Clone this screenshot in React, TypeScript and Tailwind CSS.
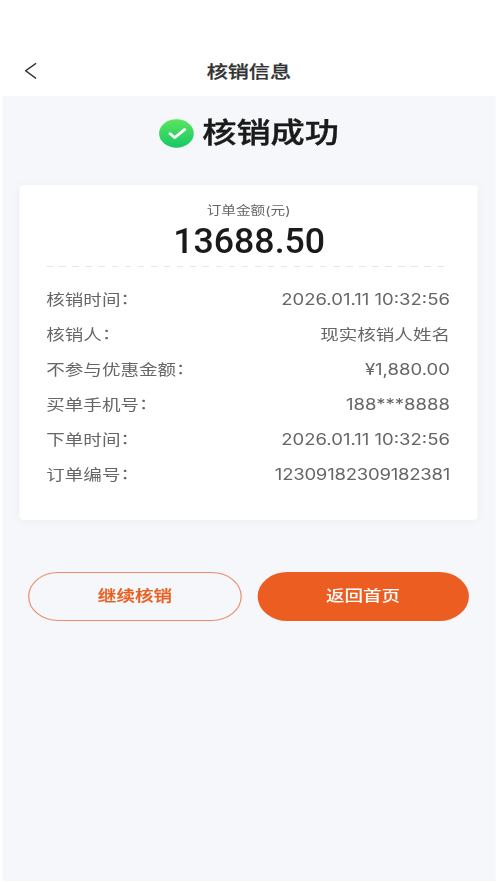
type Row = {
  label: string;
  value: string;
};

const rows: Row[] = [
  { label: '核销时间', value: '2026.01.11 10:32:56' },
  { label: '核销人', value: '现实核销人姓名' },
  { label: '不参与优惠金额', value: '¥1,880.00' },
  { label: '买单手机号', value: '188***8888' },
  { label: '下单时间', value: '2026.01.11 10:32:56' },
  { label: '订单编号', value: '12309182309182381' },
];

function BackIcon() {
  return (
    <svg width="10" height="18" viewBox="0 0 10 18" fill="none">
      <path d="M9.6 1.2L1 8.8L9.6 16.4" stroke="#333333" strokeWidth="1.3" />
    </svg>
  );
}

function SuccessIcon() {
  return (
    <svg width="29" height="29" viewBox="0 0 29 29" fill="none">
      <defs>
        <linearGradient id="success" x1="0" y1="0" x2="0" y2="1">
          <stop offset="0" stopColor="#5be55c" />
          <stop offset="1" stopColor="#16c867" />
        </linearGradient>
      </defs>
      <circle cx="14.5" cy="14.5" r="14.2" fill="url(#success)" />
      <path
        d="M9.2 14.6L13.1 18.6L21.2 10.5"
        stroke="#ffffff"
        strokeWidth="2.5"
        strokeLinecap="round"
        strokeLinejoin="round"
      />
    </svg>
  );
}

export default function App() {
  return (
    <div className="h-[883px] w-[497px] overflow-hidden bg-white">
      {/* 407px layout stretched to the full viewport width */}
      <div className="flex h-full w-[407px] origin-left scale-x-[1.2211] flex-col pr-px pb-[2px] pl-[1.6px] font-['Inter','Noto_Sans_CJK_SC',sans-serif] whitespace-nowrap">
        <header className="grid h-24 shrink-0 grid-cols-[1fr_auto_1fr] items-end bg-white pb-3">
          <button className="mb-[4px] ml-[18.5px] w-fit" aria-label="返回">
            <BackIcon />
          </button>
          <h1 className="text-[17.3px] leading-6 font-medium text-[#333333] [-webkit-text-stroke:0.25px_#333333]">
            核销信息
          </h1>
        </header>

        <main className="flex flex-1 flex-col bg-[#f5f7fb] pr-[15.2px] pl-[14.8px]">
          <div className="mt-[15px] flex h-11 items-center justify-center gap-[7px]">
            <SuccessIcon />
            <span className="text-[28px] leading-10 font-medium text-[#1a1a1a] [-webkit-text-stroke:0.4px_#1a1a1a]">
              核销成功
            </span>
          </div>

          <section className="mt-[30px] flex h-[335px] flex-col rounded bg-white px-[21.5px] pt-[17px] shadow-[0_1px_10px_rgba(0,0,0,0.04)]">
            <p className="text-center text-[12px] leading-[18px] text-[#666666]">订单金额(元)</p>
            <div className="flex h-[42px] items-center justify-center">
              <span className="scale-x-[0.84] font-['Roboto',sans-serif] text-[34.8px] font-medium text-[#1a1a1a]">
                13688.50
              </span>
            </div>
            <div className="mt-1 h-px bg-[repeating-linear-gradient(90deg,#e6e6e6_0,#e6e6e6_5.3px,transparent_5.3px,transparent_10.67px)]" />
            <dl className="mt-[15px] text-[15.2px] leading-[35px] text-[#666666]">
              {rows.map((row) => (
                <div key={row.label} className="flex justify-between">
                  <dt>
                    {row.label}
                    <span className="inline-block -translate-y-px">：</span>
                  </dt>
                  <dd className={row.value.length === 17 ? 'mr-[0.8px] tracking-[-0.2px]' : 'mr-[0.8px]'}>
                    {row.value}
                  </dd>
                </div>
              ))}
            </dl>
          </section>

          <div className="mt-[52px] flex gap-[12.5px] pr-[6.9px] pl-[6.5px] text-[15.2px] font-medium">
            <button className="h-[49px] flex-1 rounded-full border border-[#ea8f6d] text-[#e95d20] [-webkit-text-stroke:0.25px_#e95d20]">
              继续核销
            </button>
            <button className="h-[49px] flex-1 rounded-full bg-[#eb5d20] text-white">返回首页</button>
          </div>
        </main>
      </div>
    </div>
  );
}
